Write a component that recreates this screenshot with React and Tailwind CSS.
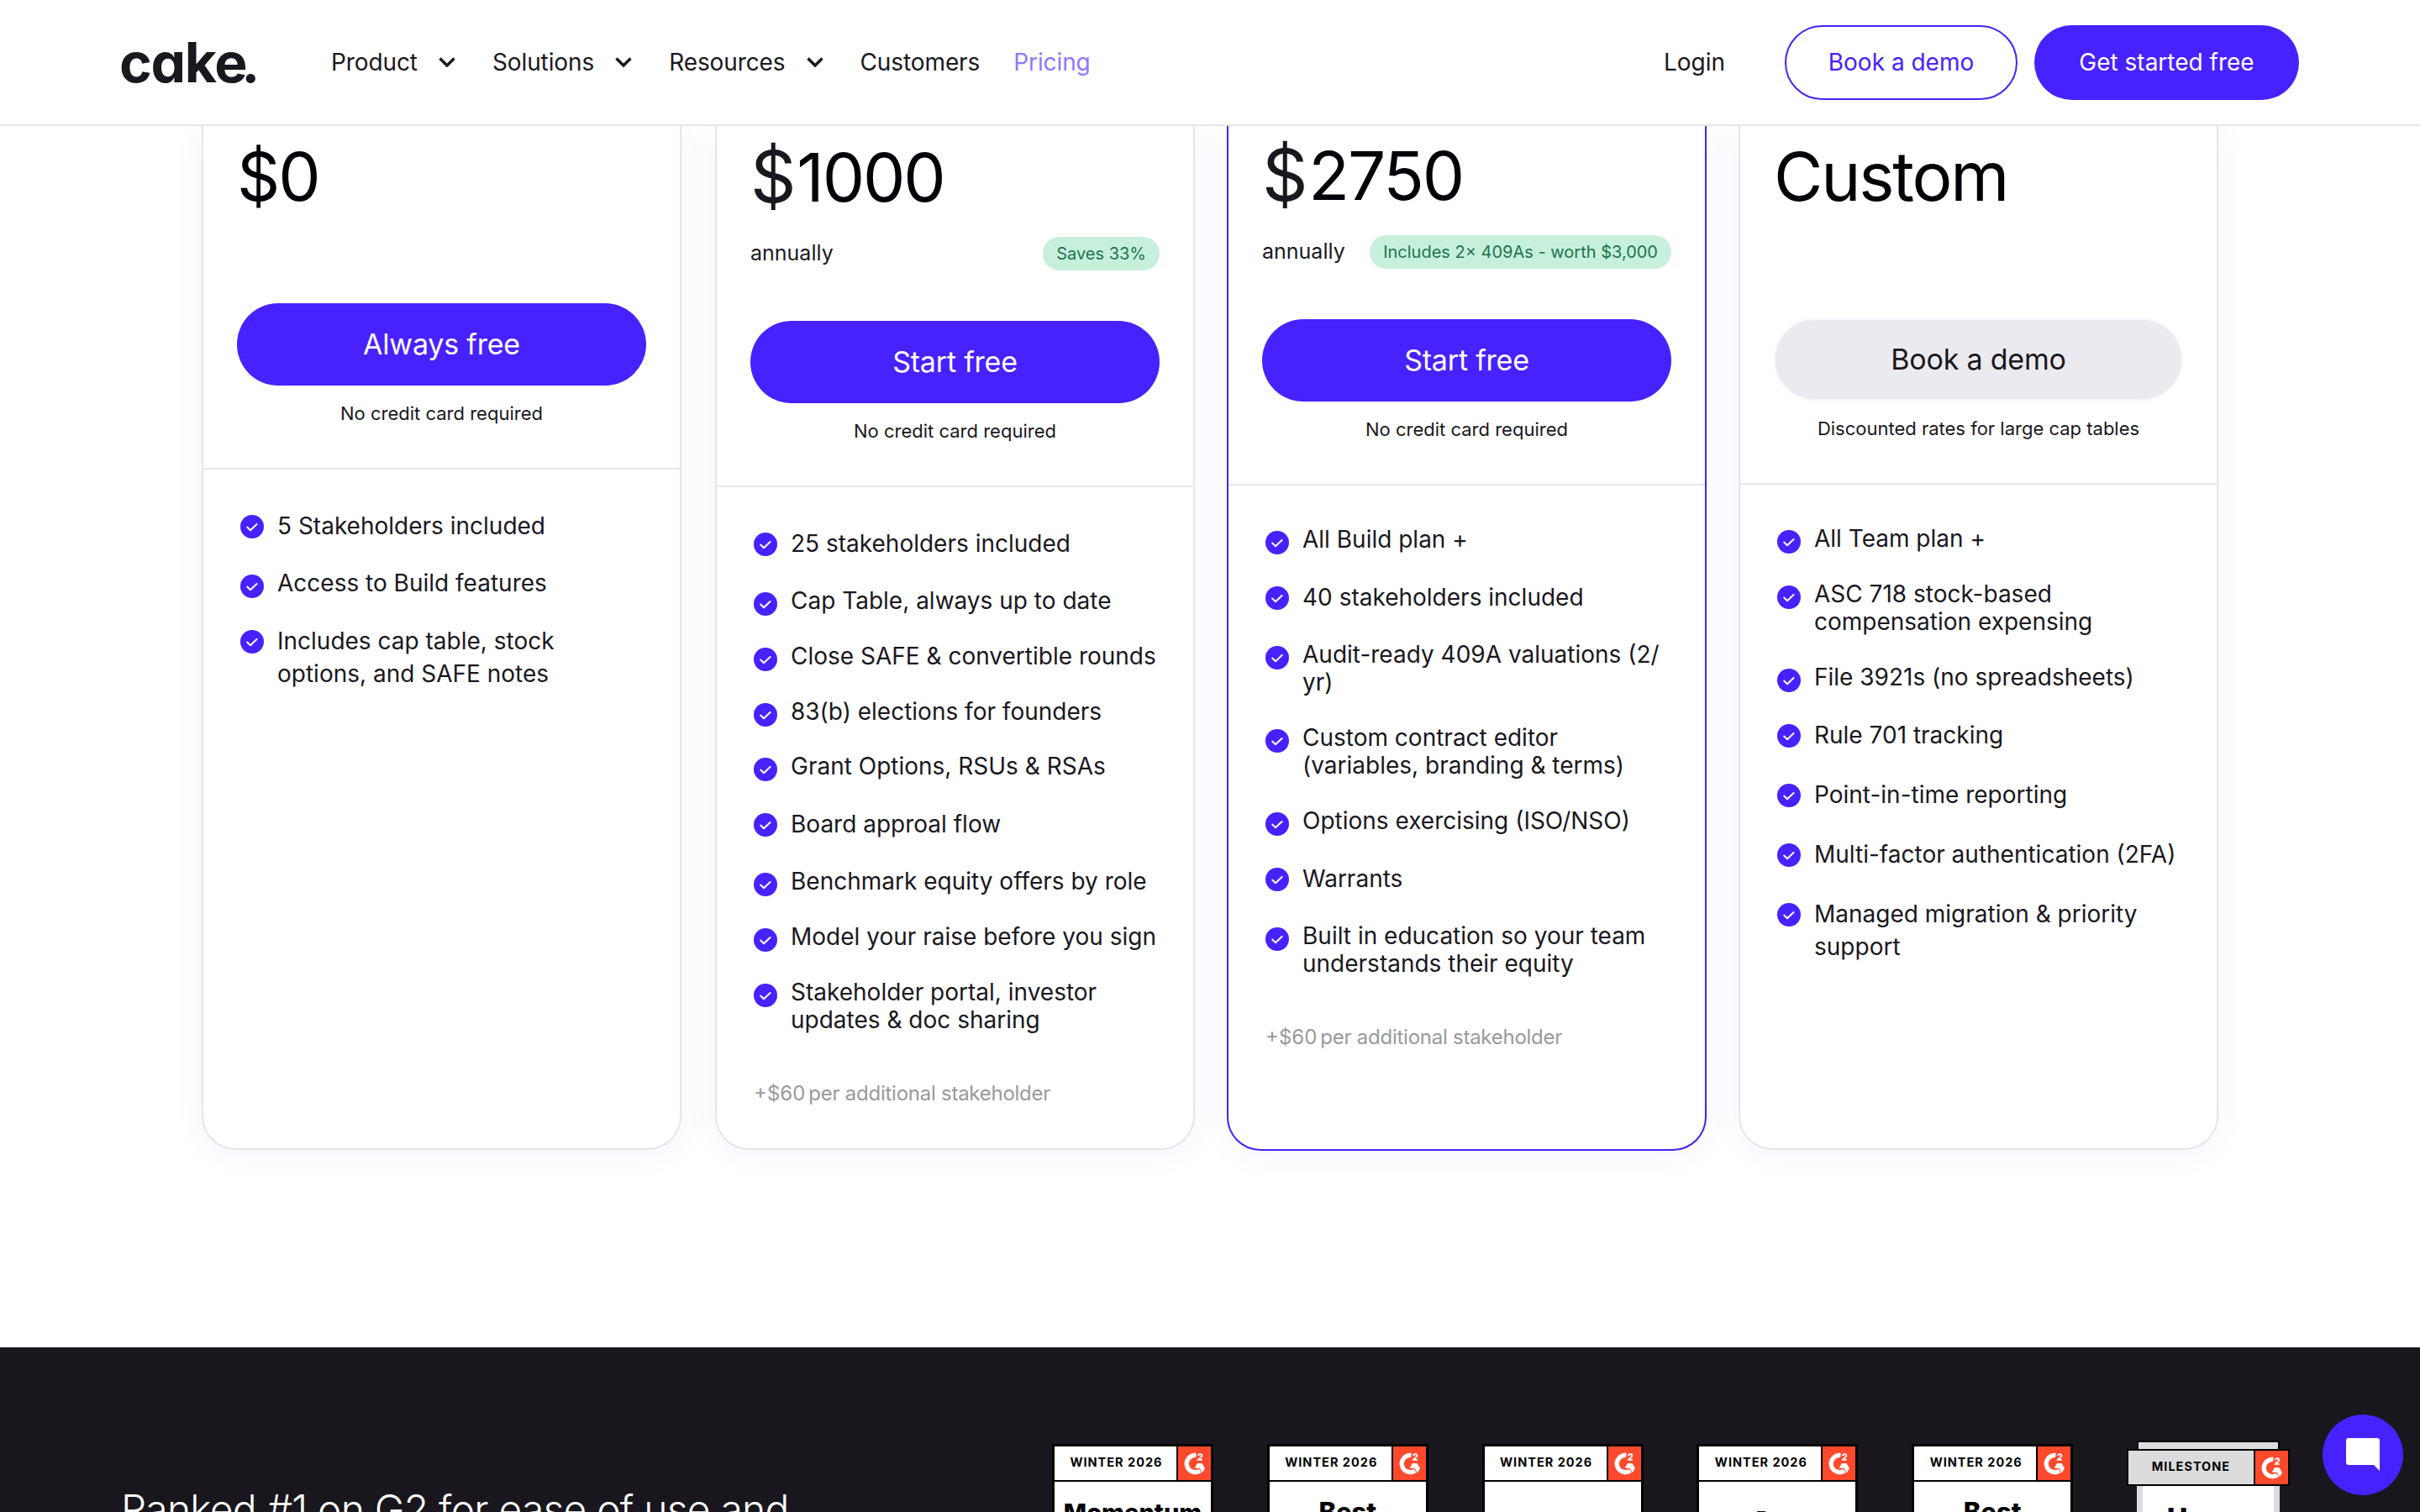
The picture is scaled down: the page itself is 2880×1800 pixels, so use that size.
const navItems = [
  { label: "Product", menu: true },
  { label: "Solutions", menu: true },
  { label: "Resources", menu: true },
  { label: "Customers" },
  { label: "Pricing", active: true },
];

// tall: single items that use the looser line height
const plans = [
  {
    id: "starter",
    price: "$0",
    cta: "Always free",
    note: "No credit card required",
    top: "pt-5",
    ctaTop: "mt-[111px]",
    features: [
      { text: "5 Stakeholders included", tall: true },
      { text: "Access to Build features" },
      { text: "Includes cap table, stock options, and SAFE notes", tall: true },
    ],
  },
  {
    id: "build",
    currency: "$",
    price: "1000",
    badge: "Saves 33%",
    cta: "Start free",
    note: "No credit card required",
    top: "pt-[21px]",
    ctaTop: "mt-[60px]",
    features: [
      { text: "25 stakeholders included", tall: true },
      { text: "Cap Table, always up to date" },
      { text: "Close SAFE & convertible rounds" },
      { text: "83(b) elections for founders" },
      { text: "Grant Options, RSUs & RSAs" },
      { text: "Board approal flow", tall: true },
      { text: "Benchmark equity offers by role" },
      { text: "Model your raise before you sign" },
      { text: "Stakeholder portal, investor updates & doc sharing" },
    ],
    extra: true,
  },
  {
    id: "team",
    currency: "$",
    price: "2750",
    badge: "Includes 2× 409As - worth $3,000",
    cta: "Start free",
    note: "No credit card required",
    top: "pt-[19px]",
    ctaTop: "mt-[60px]",
    highlight: true,
    features: [
      { text: "All Build plan +" },
      { text: "40 stakeholders included", tall: true },
      { text: "Audit-ready 409A valuations (2/\nyr)" },
      { text: "Custom contract editor (variables, branding & terms)" },
      { text: "Options exercising (ISO/NSO)" },
      { text: "Warrants", tall: true },
      { text: "Built in education so your team understands their equity" },
    ],
    extra: true,
  },
  {
    id: "custom",
    price: "Custom",
    cta: "Book a demo",
    note: "Discounted rates for large cap tables",
    top: "pt-5",
    ctaTop: "mt-[129px]",
    muted: true,
    features: [
      { text: "All Team plan +" },
      { text: "ASC 718 stock-based compensation expensing" },
      { text: "File 3921s (no spreadsheets)" },
      { text: "Rule 701 tracking", tall: true },
      { text: "Point-in-time reporting", tall: true },
      { text: "Multi-factor authentication (2FA)", tall: true },
      { text: "Managed migration & priority support", tall: true },
    ],
  },
];

const awards = [
  { title: "Momentum", style: "pt-[19px] text-[29px]" },
  { title: "Best", style: "pt-[18px] text-[31px]" },
  { title: "Best", style: "pt-[29px] text-[23px]" },
  { title: "Best", style: "pt-[26px] text-[23px]" },
  { title: "Best", style: "pt-[18px] text-[31px]" },
];

function ChevronDown() {
  return (
    <svg viewBox="0 0 20 12" className="ml-[25px] h-3 w-5 fill-none stroke-[#1a171e]">
      <path d="M1.5 1.5 10 10l8.5-8.5" strokeWidth="3.4" />
    </svg>
  );
}

function CheckIcon() {
  return (
    <svg viewBox="0 0 28 28" className="mt-1.5 size-7 shrink-0">
      <circle cx="14" cy="14" r="14" className="fill-[#4821ff]" />
      <path d="m8.2 14.6 3.8 3.6 7.6-7.2" className="fill-none stroke-white" strokeWidth="2" strokeLinecap="round" strokeLinejoin="round" />
    </svg>
  );
}

function G2Mark() {
  return (
    <svg viewBox="0 0 40 40" className="h-10 w-[39px]">
      <path d="M22 10.2A10.4 10.4 0 1 0 27 29" className="fill-none stroke-white" strokeWidth="5.4" />
      <path d="M23.5 20h5.700l3.600 6.200-3.200 5.400-3.400-5.800h-6z" className="fill-white" />
      <path d="M24.500 10.900c.4-2.600 4.900-2.600 4.600.2-.3 1.800-2.900 2.400-4.500 4.700h5" className="fill-none stroke-white" strokeWidth="1.9" />
    </svg>
  );
}

function Header() {
  return (
    <header className="relative z-10 flex h-[150px] shrink-0 items-center border-b-2 border-[#e6e6e6] bg-white pl-[142px] pr-36 text-[28px] text-[#1a171e]">
      <div className="w-[252px] text-[66px] font-bold leading-none tracking-[-1.3px] [font-feature-settings:'cv11']">
        cake<span className="-ml-[6px]">.</span>
      </div>
      <nav className="flex flex-1 items-center gap-11 tracking-[-0.1px]">
        {navItems.map((item) => (
          <a key={item.label} className={item.active ? "-ml-[4px] flex items-center text-[#8f78ff]" : "flex items-center"}>
            {item.label}
            {item.menu && <ChevronDown />}
          </a>
        ))}
      </nav>
      <a className="mr-[71px]">Login</a>
      <a className="mr-5 flex h-[89px] w-[277px] items-center justify-center rounded-full border-2 border-[#4821ff] text-[#4821ff]">Book a demo</a>
      <a className="flex h-[89px] w-[315px] items-center justify-center rounded-full bg-[#4821ff] text-white">Get started free</a>
    </header>
  );
}

function PlanCard({ plan }) {
  return (
    <div
      className={
        "flex w-[571px] flex-col rounded-b-[40px] border-2 border-t-0 bg-white shadow-[0_4px_40px_rgba(72,33,255,0.05)] first:mr-[2px] " +
        (plan.highlight ? "h-[1220px] border-[#4821ff]" : "h-[1219px] border-[#e6e6e8]")
      }
    >
      <div className={"border-b-2 border-[#e8e8e8] px-10 pb-[49px] " + plan.top}>
        <div className="flex h-20 items-center text-[80px] leading-[80px] tracking-[-2.2px] text-[#030008]">
          {plan.currency && <span className="mr-[3px] text-[85px] text-[#1a171e]">{plan.currency}</span>}
          {plan.price}
        </div>
        {plan.badge && (
          <div className="mt-[31px] flex h-10 items-center justify-between">
            <span className="text-[25px]">annually</span>
            <span className="flex h-10 items-center rounded-full bg-[#c7f0dc] px-4 text-[20px] text-[#1c754e]">{plan.badge}</span>
          </div>
        )}
        <button
          className={
            "flex h-[98px] w-full items-center justify-center rounded-full pb-[2px] text-[34px] tracking-[-0.2px] " +
            plan.ctaTop +
            (plan.muted ? " border-2 border-[#f7f7fb] bg-[#ebebef] text-[#1a171e]" : " bg-[#4821ff] text-white")
          }
        >
          {plan.cta}
        </button>
        <p className="mt-[18px] text-center text-[22px] leading-[31px]">{plan.note}</p>
      </div>
      <ul className="flex flex-col gap-[31.8px] pl-11 pr-10 pt-12">
        {plan.features.map((feature) => (
          <li key={feature.text} className="flex gap-4">
            <CheckIcon />
            <span className={feature.tall ? "whitespace-pre-line leading-[39.2px]" : "whitespace-pre-line leading-[33.6px]"}>{feature.text}</span>
          </li>
        ))}
      </ul>
      {plan.extra && (
        <p className="mt-[53px] flex gap-1 pl-11 text-[24px] leading-[34px] text-[#999]">
          <span>+$60</span>
          <span className="tracking-[-0.25px]">per additional stakeholder</span>
        </p>
      )}
    </div>
  );
}

function AwardBadge({ award }) {
  return (
    <div className="h-[240px] w-[192px] border-[3px] border-black bg-white text-black">
      <div className="flex h-[42px] border-b-2 border-black">
        <div className="flex flex-1 items-center justify-center border-r-2 border-black pb-[2px] pl-[2px] text-[14.5px] font-bold tracking-[1px]">WINTER 2026</div>
        <div className="w-[39px] bg-[#ff492c]">
          <G2Mark />
        </div>
      </div>
      <div className={"text-center font-extrabold leading-[36px] " + award.style}>{award.title}</div>
    </div>
  );
}

function MilestoneBadge() {
  return (
    <div className="-mt-1 flex w-[194px] flex-col items-center text-black">
      <div className="h-[10px] w-[170px] border-2 border-b-0 border-black bg-[#dcdcdc]" />
      <div className="flex h-[44px] w-full border-2 border-black bg-[#dcdcdc]">
        <div className="flex flex-1 items-center justify-center border-r-2 border-black pb-[2px] text-[14.5px] font-bold tracking-[1px]">MILESTONE</div>
        <div className="w-[39px] bg-[#ff492c]">
          <G2Mark />
        </div>
      </div>
      <div className="h-[200px] w-[170px] border-x-[7px] border-[#dcdcdc] bg-white pt-[21px] text-center text-[34px] font-extrabold leading-[36px]">Users</div>
    </div>
  );
}

export default function App() {
  return (
    <div className="relative flex h-[1800px] w-[2880px] flex-col overflow-hidden bg-white font-['Inter',sans-serif] text-[28px] text-[#1a171e]">
      <Header />
      <main className="flex h-[1454px] shrink-0 items-start gap-[38px] pl-[240px]">
        {plans.map((plan) => (
          <PlanCard key={plan.id} plan={plan} />
        ))}
      </main>
      <section className="relative flex flex-1 items-start bg-[#19171d] pl-36 pt-[115px] text-white">
        <h2 className="mt-[49px] w-[1108px] whitespace-nowrap text-[48px] font-light leading-[58px] tracking-[-0.8px]">Ranked #1 on G2 for ease of use and</h2>
        <div className="flex items-start gap-[63.8px]">
          {awards.map((award, i) => (
            <AwardBadge key={i} award={award} />
          ))}
          <MilestoneBadge />
        </div>
      </section>
      <button className="absolute right-5 top-[1684px] flex size-24 items-center justify-center rounded-full bg-[#4821ff]">
        <svg viewBox="0 0 40 40" className="size-10 fill-white">
          <path d="M3 0h34a3 3 0 0 1 3 3v36l-7-7H3a3 3 0 0 1-3-3V3a3 3 0 0 1 3-3z" />
        </svg>
      </button>
    </div>
  );
}
